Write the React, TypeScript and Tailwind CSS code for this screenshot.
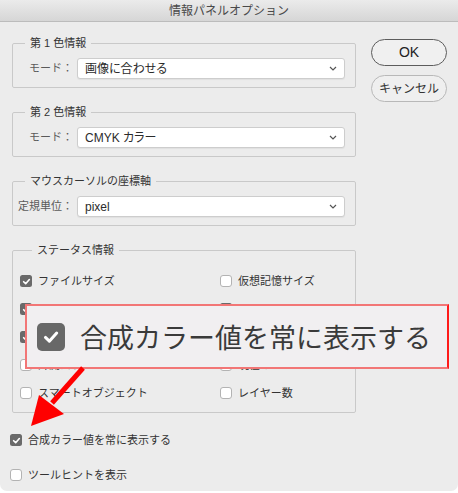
import React from "react";

function Check({ checked, big = false }: { checked: boolean; big?: boolean }) {
  if (big) {
    return (
      <div className="w-[28px] h-[28px] rounded-[5px] bg-[#686868] flex items-center justify-center shrink-0">
        <svg width="18" height="18" viewBox="0 0 12 12">
          <path d="M2.3 6.3 L4.9 8.8 L9.8 3.4" fill="none" stroke="#ffffff" strokeWidth="2" strokeLinecap="round" strokeLinejoin="round" />
        </svg>
      </div>
    );
  }
  if (checked) {
    return (
      <div className="w-[12px] h-[12px] rounded-[2.5px] bg-[#6a6a6a] flex items-center justify-center shrink-0">
        <svg width="9" height="9" viewBox="0 0 12 12">
          <path d="M2.2 6.3 L4.9 8.9 L9.8 3.4" fill="none" stroke="#ffffff" strokeWidth="2.2" strokeLinecap="round" strokeLinejoin="round" />
        </svg>
      </div>
    );
  }
  return <div className="w-[12px] h-[12px] rounded-[3px] bg-white border border-[#b3b3b3] shrink-0" />;
}

function Select({ value }: { value: string }) {
  return (
    <div className="flex-1 h-[21px] bg-white border border-[#cdcdcd] rounded-[3px] shadow-[0_1px_1px_rgba(0,0,0,0.05)] flex items-center pl-[7px] pr-[7px]">
      <span className="flex-1 text-[12px] leading-none text-[#2b2b2b] [font-feature-settings:'palt']">{value}</span>
      <svg width="8" height="5" viewBox="0 0 8 5">
        <path d="M1 1 L4 4 L7 1" fill="none" stroke="#555555" strokeWidth="1.2" />
      </svg>
    </div>
  );
}

function Group({ title, label, value }: { title: string; label: string; value: string }) {
  return (
    <fieldset className="border border-[#c9c9c9] rounded-[2px] pt-[8px] pb-[8px] pr-[10px]">
      <legend className="ml-[12px] px-[5px] text-[11px] leading-[14px] text-[#333]">{title}</legend>
      <div className="flex items-center">
        <span className="w-[61px] text-right pr-[1px] text-[11px] leading-none text-[#5a5a5a]">{label}</span>
        <div className="w-[3px]" />
        <Select value={value} />
      </div>
    </fieldset>
  );
}

function Item({ checked, label }: { checked: boolean; label: string }) {
  return (
    <div className="h-[28px] flex items-center gap-[6px]">
      <Check checked={checked} />
      <span className="text-[11px] leading-none text-[#333] whitespace-nowrap">{label}</span>
    </div>
  );
}

export default function App() {
  const items: [boolean, string, boolean, string][] = [
    [true, "ファイルサイズ", false, "仮想記憶サイズ"],
    [true, "", true, ""],
    [true, "", false, ""],
    [false, "計測スケール", false, "現在のツール"],
    [false, "スマートオブジェクト", false, "レイヤー数"],
  ];
  return (
    <div className="relative w-[458px] h-[493px] bg-white font-['Liberation_Sans','Noto_Sans_CJK_JP',sans-serif]">
      <div className="h-[491px] bg-[#ececec] rounded-b-[7px] overflow-hidden flex flex-col">
        <div className="h-[22px] shrink-0 border-b border-[#bcbcbc] bg-linear-to-b from-[#ebebeb] to-[#d6d6d6] flex items-center justify-center text-[12px] text-[#4a4a4a]">
          情報パネルオプション
        </div>
        <div className="flex pt-[14px]">
          <div className="ml-[12px] w-[344px] flex flex-col">
            <div className="flex flex-col gap-[17px]">
              <Group title="第 1 色情報" label="モード：" value="画像に合わせる" />
              <Group title="第 2 色情報" label="モード：" value="CMYK カラー" />
              <Group title="マウスカーソルの座標軸" label="定規単位：" value="pixel" />
              <fieldset className="border border-[#c9c9c9] rounded-[2px] pt-[10px] pb-[5px] pl-[7px]">
                <legend className="ml-[12px] px-[5px] text-[11px] leading-[14px] text-[#333]">ステータス情報</legend>
                <div className="grid grid-cols-[200px_1fr]">
                  {items.map((r, i) => (
                    <React.Fragment key={i}>
                      <Item checked={r[0]} label={r[1]} />
                      <Item checked={r[2]} label={r[3]} />
                    </React.Fragment>
                  ))}
                </div>
              </fieldset>
            </div>
            <div className="-ml-[2px] mt-[17px] flex flex-col gap-[15px]">
              <div className="h-[20px] flex items-center gap-[6px]">
                <Check checked={true} />
                <span className="text-[11px] leading-none text-[#333]">合成カラー値を常に表示する</span>
              </div>
              <div className="h-[20px] flex items-center gap-[6px]">
                <Check checked={false} />
                <span className="text-[11px] leading-none text-[#333]">ツールヒントを表示</span>
              </div>
            </div>
          </div>
          <div className="ml-[15px] pt-[3px] flex flex-col gap-[9px]">
            <div className="w-[76px] h-[27px] rounded-full border border-[#5c5c5c] bg-[#f0f0f0] flex items-center justify-center text-[14px] text-[#222]">
              OK
            </div>
            <div className="w-[76px] h-[27px] rounded-full border border-[#b8b8b8] bg-[#efefef] flex items-center justify-center text-[12px] text-[#333]">
              キャンセル
            </div>
          </div>
        </div>
      </div>

      <div className="absolute left-[25px] top-[304px] w-[424px] h-[65px] bg-[#f1eff1] border-2 border-[#f27676] border-r-[#ff1a1a] flex items-center pl-[10px] gap-[15px]">
        <Check checked={true} big />
        <span className="text-[27px] leading-none text-[#3a3a3a] font-['Noto_Sans_CJK_JP',sans-serif]">合成カラー値を常に表示する</span>
      </div>

      <svg className="absolute left-0 top-0 pointer-events-none" width="458" height="493" viewBox="0 0 458 493">
        <line x1="83" y1="368" x2="52" y2="403" stroke="#ff0000" strokeWidth="5" />
        <polygon points="31,426 39,395 64,414" fill="#ff0000" />
      </svg>
    </div>
  );
}
